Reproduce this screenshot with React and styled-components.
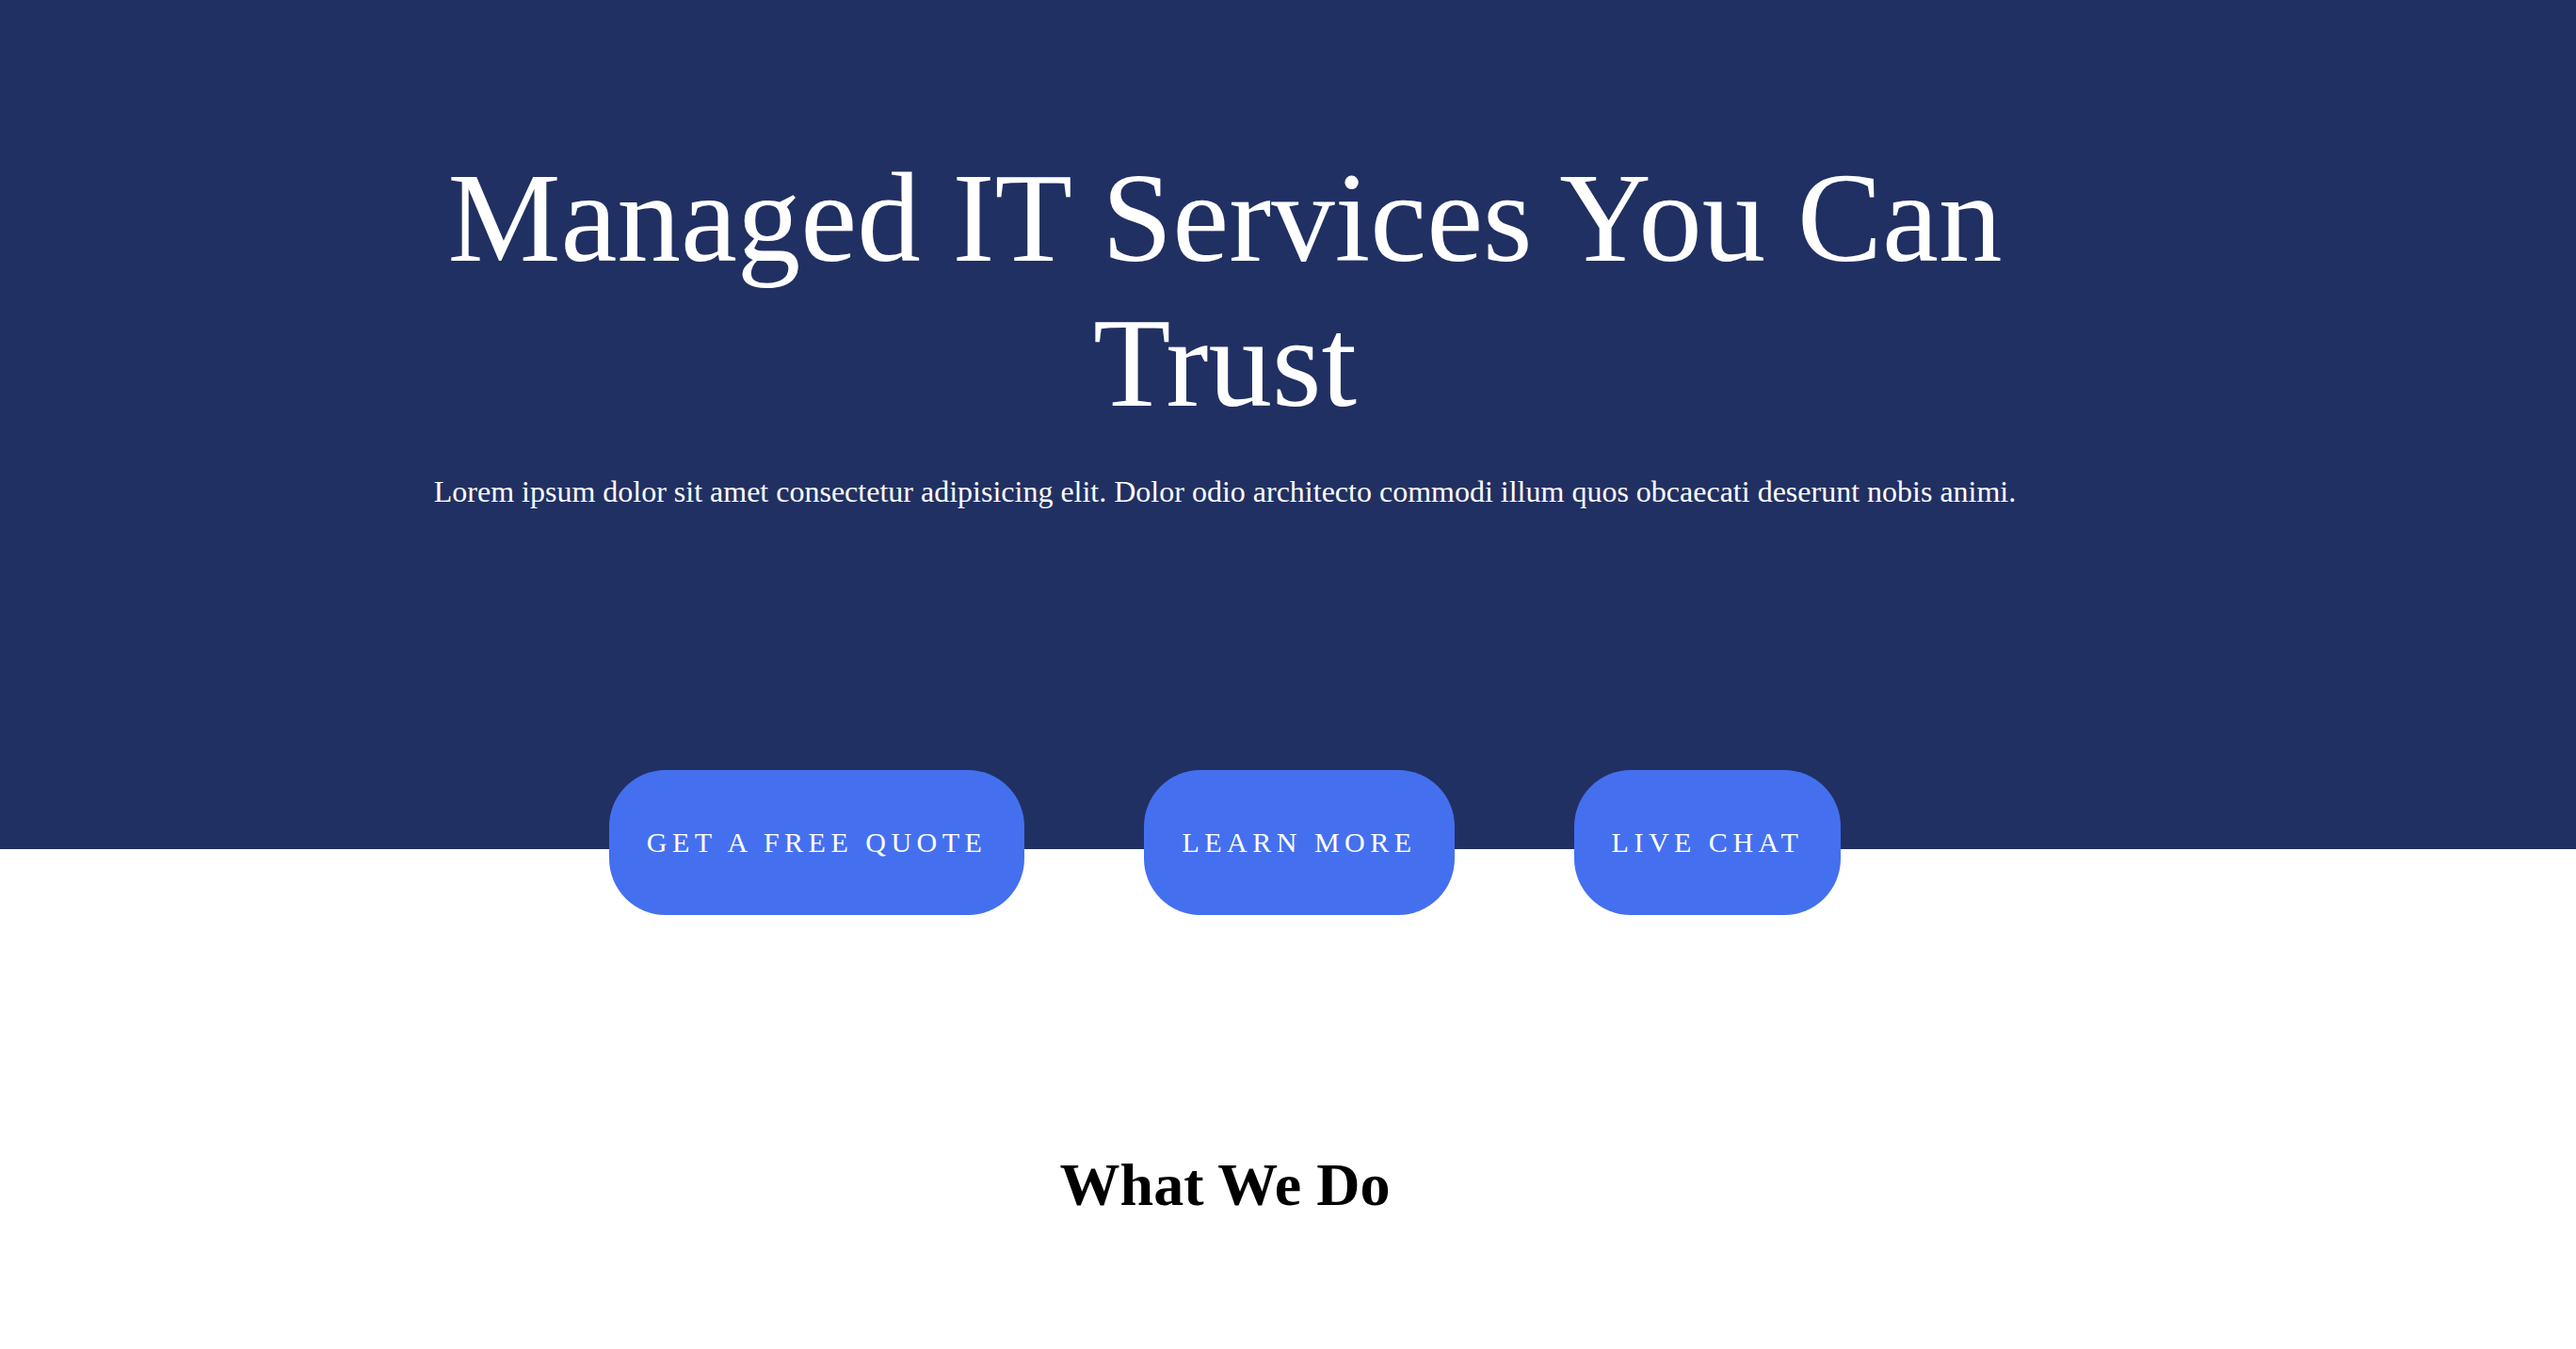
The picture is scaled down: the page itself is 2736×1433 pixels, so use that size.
import React from 'react';
import styled, { createGlobalStyle } from 'styled-components';

const GlobalStyle = createGlobalStyle`
  html, body {
    margin: 0;
    padding: 0;
    background: #ffffff;
  }
  body {
    font-family: "Liberation Serif", "Times New Roman", serif;
  }
`;

// Hero
const Hero = styled.header`
  display: flex;
  flex-direction: column;
  align-items: center;
  background: #213062;
  color: #ffffff;
  padding: 155px 134px 0 0;
`;

const HeroTitle = styled.h1`
  max-width: 1720px;
  margin: 0;
  font-size: 135px;
  font-weight: 400;
  line-height: 154px;
  text-align: center;
`;

const HeroLead = styled.p`
  margin: 41px 0 0;
  font-size: 32px;
  line-height: 37px;
  text-align: center;
`;

const ButtonRow = styled.div`
  position: relative;
  z-index: 1;
  display: flex;
  justify-content: center;
  gap: 127px;
  margin: 277px 0 -70px;
`;

const PillButton = styled.button`
  border: none;
  border-radius: 60px;
  background: #4470ef;
  color: #ffffff;
  font-family: "Liberation Serif", "Times New Roman", serif;
  font-size: 30px;
  line-height: 34px;
  letter-spacing: 5.5px;
  text-transform: uppercase;
  padding: 60px 40px;
  cursor: pointer;
`;

// What we do
const Services = styled.section`
  display: flex;
  flex-direction: column;
  align-items: center;
  padding: 320px 134px 80px 0;
`;

const SectionTitle = styled.h2`
  margin: 0;
  font-size: 64px;
  font-weight: 700;
  line-height: 74px;
  color: #000000;
`;

const actions = ['Get a free quote', 'Learn more', 'Live chat'];

export default function App() {
  return (
    <>
      <GlobalStyle />
      <Hero>
        <HeroTitle>Managed IT Services You Can Trust</HeroTitle>
        <HeroLead>
          Lorem ipsum dolor sit amet consectetur adipisicing elit. Dolor odio architecto commodi illum quos obcaecati deserunt nobis animi.
        </HeroLead>
        <ButtonRow>
          {actions.map((label) => (
            <PillButton key={label}>{label}</PillButton>
          ))}
        </ButtonRow>
      </Hero>
      <Services>
        <SectionTitle>What We Do</SectionTitle>
      </Services>
    </>
  );
}
